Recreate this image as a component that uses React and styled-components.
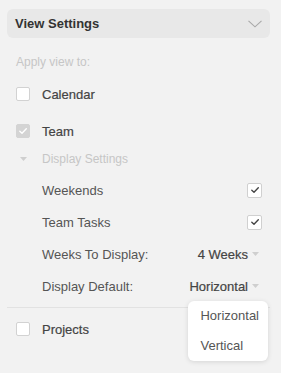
import React from "react";
import styled, { createGlobalStyle } from "styled-components";

const Global = createGlobalStyle`
  html, body { margin: 0; padding: 0; background: #f2f2f2; }
  body { font-family: "Liberation Sans", Arial, Helvetica, sans-serif; -webkit-font-smoothing: antialiased; }
`;

const Panel = styled.div`
  width: 281px;
  height: 373px;
  background: #f2f2f2;
  padding-top: 9px;
  box-sizing: border-box;
  display: flex;
  flex-direction: column;
  overflow: hidden;
`;

const Header = styled.div`
  margin: 0 11px 0 7px;
  height: 29px;
  border-radius: 6px;
  background: #e8e8e8;
  display: flex;
  align-items: center;
  justify-content: space-between;
  padding: 0 8px 0 8px;
  font-size: 13px;
  font-weight: bold;
  color: #333;
`;

const Label = styled.div`
  height: 28px;
  margin-top: ${(p) => p.$mt || 0}px;
  padding-left: 16px;
  display: flex;
  align-items: center;
  font-size: 12px;
  color: #c6c6c6;
`;

const CheckRow = styled.div`
  height: 28px;
  margin-top: ${(p) => p.$mt || 0}px;
  padding-left: 16px;
  display: flex;
  align-items: center;
  gap: 12px;
  font-size: 13px;
  color: #444;
  -webkit-text-stroke: 0.2px #444;
`;

const Box = styled.span`
  width: 14px;
  height: 14px;
  box-sizing: border-box;
  border-radius: 2px;
  border: 1px solid ${(p) => (p.$checked ? "#d4d4d4" : "#d2d2d2")};
  background: ${(p) => (p.$checked ? "#d4d4d4" : "#ffffff")};
  display: flex;
  align-items: center;
  justify-content: center;
  flex: none;
`;

const Disclosure = styled.div`
  height: 28px;
  padding-left: 20px;
  display: flex;
  align-items: center;
  gap: 15px;
  font-size: 12px;
  color: #c6c6c6;
`;

const SettingRow = styled.div`
  height: 32px;
  margin-top: ${(p) => p.$mt || 0}px;
  padding: 0 19px 0 42px;
  display: flex;
  align-items: center;
  justify-content: space-between;
  font-size: 13px;
  color: #555;
`;

const SmallBox = styled.span`
  width: 15px;
  height: 15px;
  box-sizing: border-box;
  border-radius: 2px;
  border: 1px solid #d0d0d0;
  background: #fff;
  display: flex;
  align-items: center;
  justify-content: center;
`;

const Select = styled.div`
  position: relative;
  display: flex;
  align-items: center;
  gap: 4px;
  padding-right: 3px;
  color: #444;
  -webkit-text-stroke: 0.2px #444;
`;

const Menu = styled.div`
  position: absolute;
  left: -1px;
  top: 22px;
  width: 80px;
  background: #fff;
  border-radius: 6px;
  box-shadow: 0 1px 5px rgba(0, 0, 0, 0.12);
  display: flex;
  flex-direction: column;
  -webkit-text-stroke: 0;
  z-index: 2;
`;

const MenuItem = styled.div`
  height: 30px;
  padding-left: 12px;
  display: flex;
  align-items: center;
  font-size: 13px;
  color: #555;
`;

const Divider = styled.div`
  margin: 5px 11px 0 7px;
  height: 1px;
  background: #e2e2e2;
`;

const Caret = () => (
  <svg width="7" height="4" viewBox="0 0 7 4">
    <path d="M0 0 L7 0 L3.5 4 Z" fill="#cfcfcf" />
  </svg>
);

const Check = ({ color, w = 10 }) => (
  <svg width={w} height={w} viewBox="0 0 10 10">
    <path d="M1.8 5.2 L4 7.2 L8.3 2.8" fill="none" stroke={color} strokeWidth="1.4" strokeLinecap="round" strokeLinejoin="round" />
  </svg>
);

export default function App() {
  return (
    <Panel>
      <Global />
      <Header>
        <span>View Settings</span>
        <svg width="14" height="8" viewBox="0 0 14 8">
          <path d="M0.5 0.8 L7 6.8 L13.5 0.8" fill="none" stroke="#a8a8a8" strokeWidth="1.1" />
        </svg>
      </Header>
      <Label $mt={10}>Apply view to:</Label>
      <CheckRow $mt={4}>
        <Box />
        <span>Calendar</span>
      </CheckRow>
      <CheckRow $mt={9}>
        <Box $checked>
          <Check color="#ffffff" />
        </Box>
        <span>Team</span>
      </CheckRow>
      <Disclosure>
        <Caret />
        <span>Display Settings</span>
      </Disclosure>
      <SettingRow $mt={1}>
        <span>Weekends</span>
        <SmallBox>
          <Check color="#444" />
        </SmallBox>
      </SettingRow>
      <SettingRow>
        <span>Team Tasks</span>
        <SmallBox>
          <Check color="#444" />
        </SmallBox>
      </SettingRow>
      <SettingRow>
        <span>Weeks To Display:</span>
        <Select>
          <span>4 Weeks</span>
          <Caret />
        </Select>
      </SettingRow>
      <SettingRow>
        <span>Display Default:</span>
        <Select>
          <span>Horizontal</span>
          <Caret />
          <Menu>
            <MenuItem>Horizontal</MenuItem>
            <MenuItem>Vertical</MenuItem>
          </Menu>
        </Select>
      </SettingRow>
      <Divider />
      <CheckRow $mt={7}>
        <Box />
        <span>Projects</span>
      </CheckRow>
    </Panel>
  );
}
